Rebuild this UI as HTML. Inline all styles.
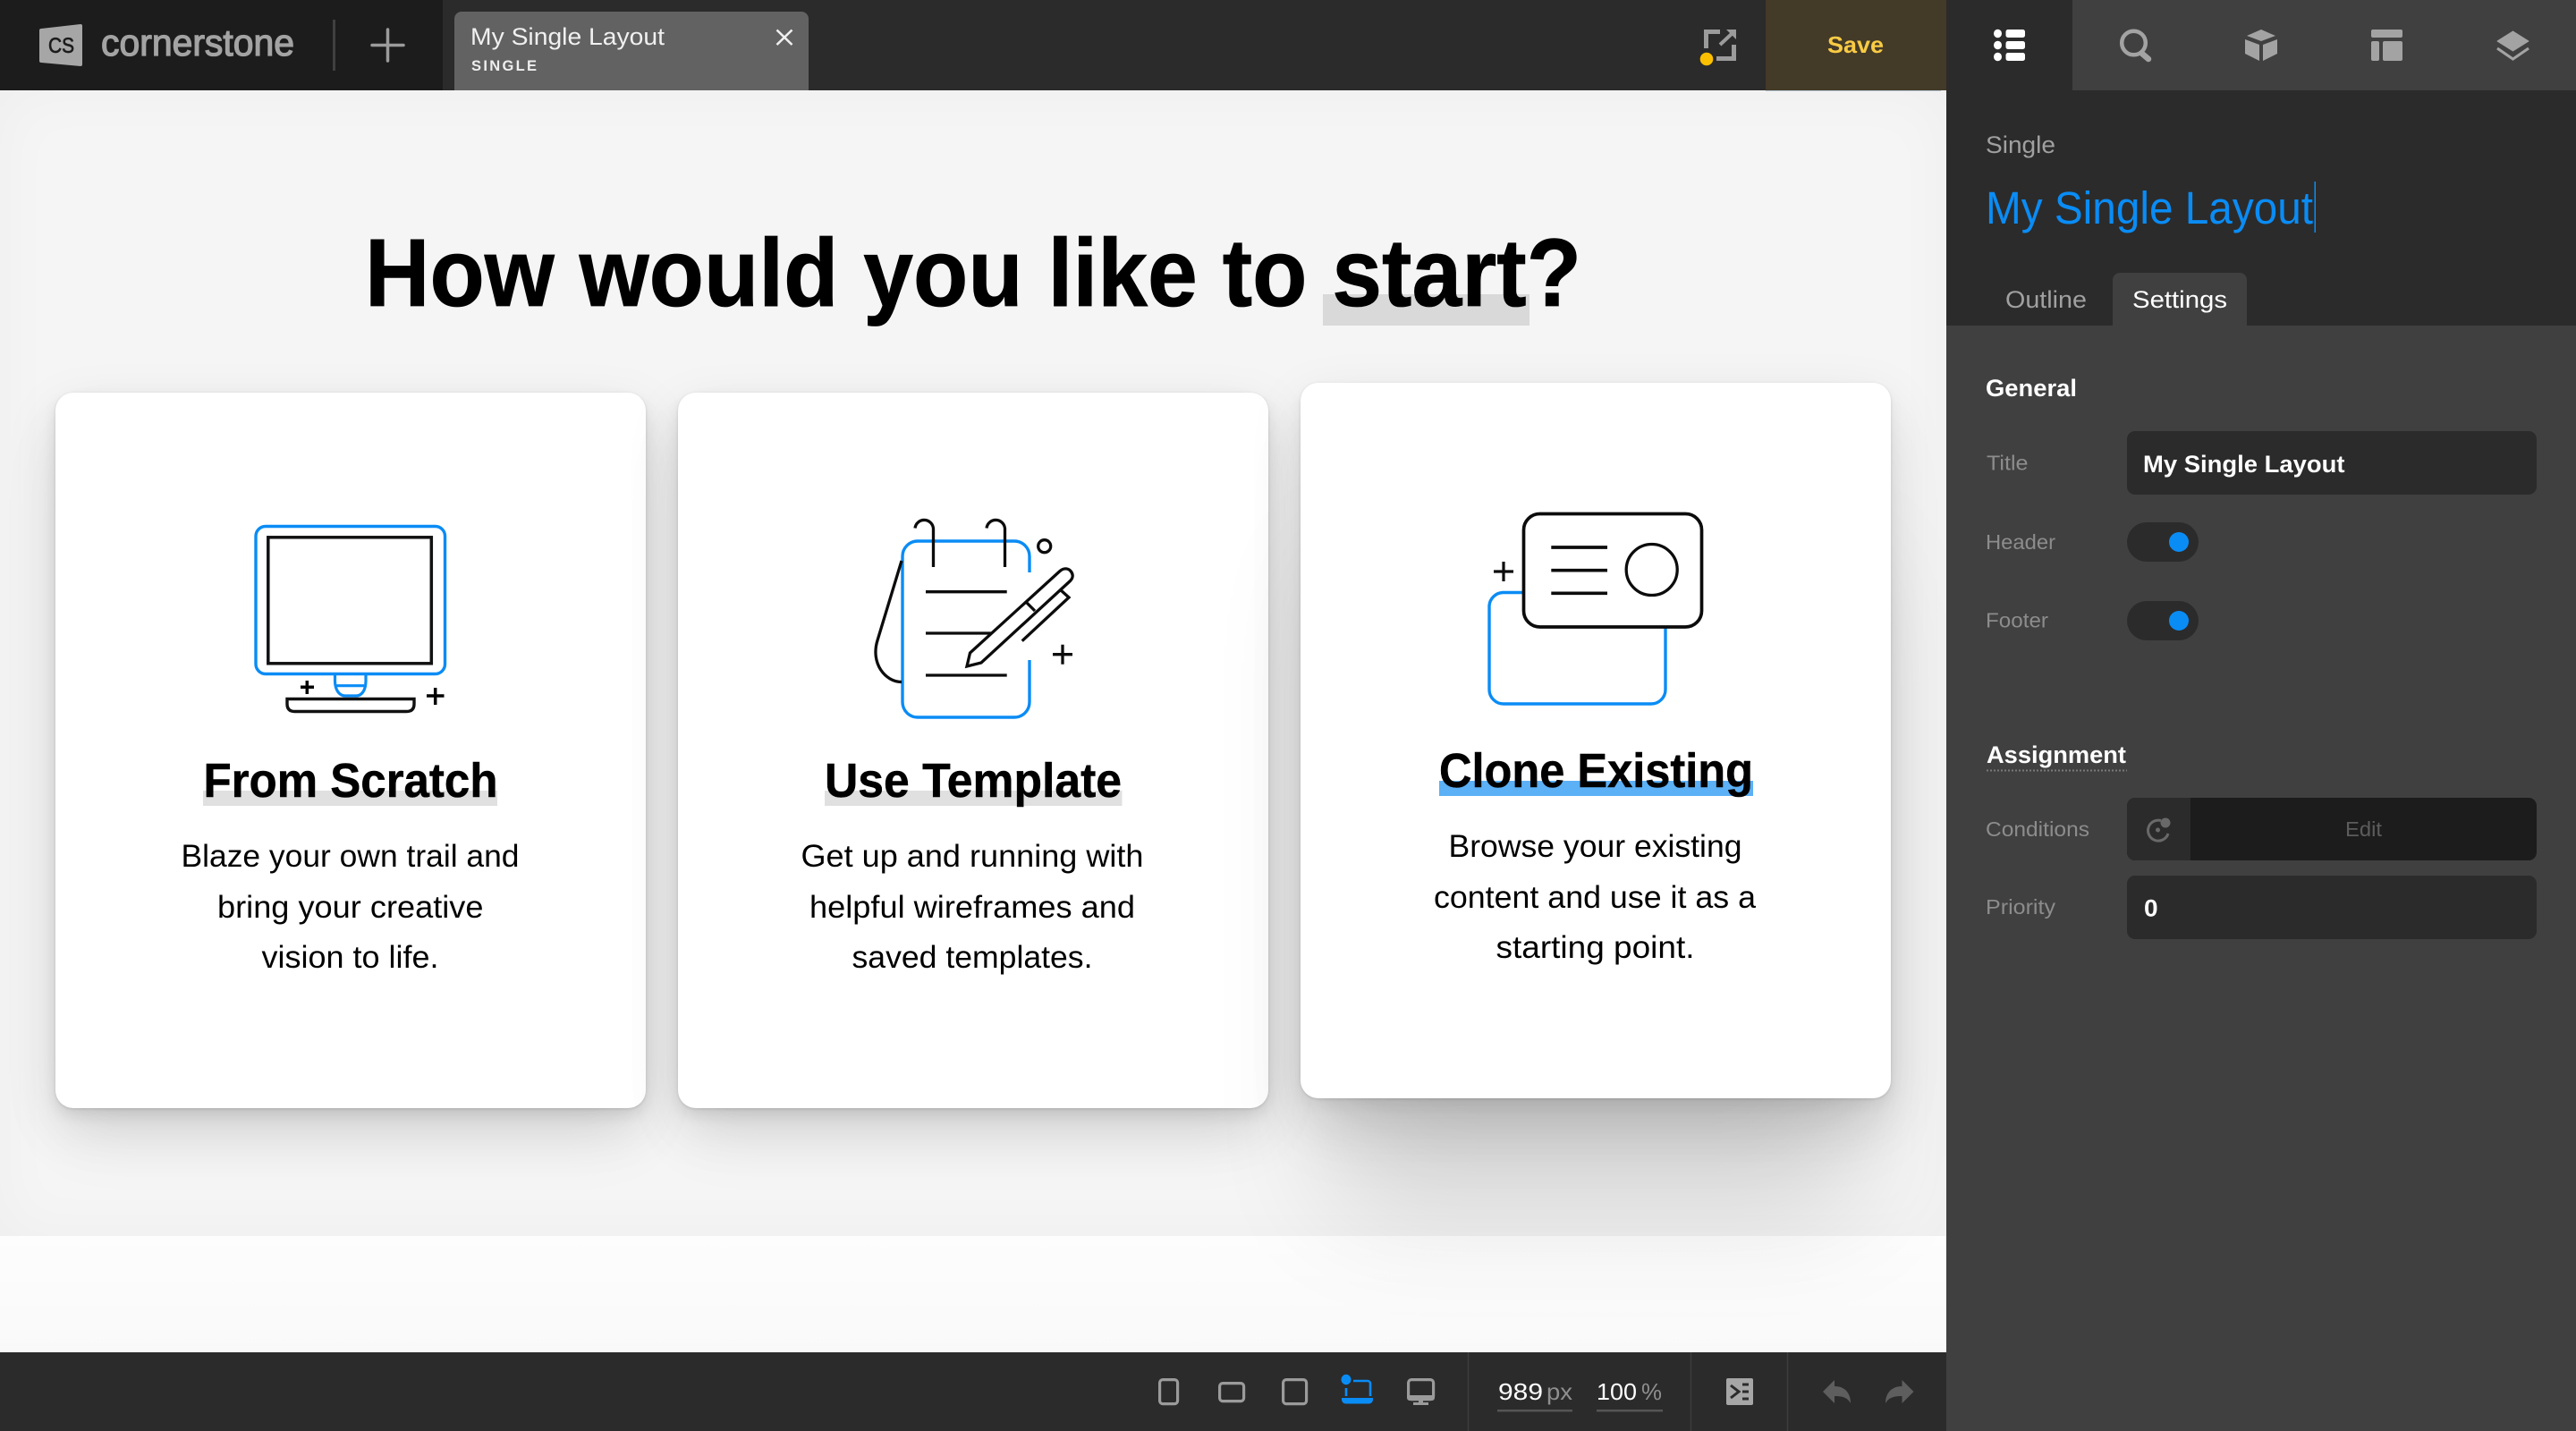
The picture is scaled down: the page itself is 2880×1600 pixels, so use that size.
<!DOCTYPE html>
<html lang="en"><head><meta charset="utf-8"><title>Cornerstone</title>
<style>
html,body{margin:0;padding:0;width:2880px;height:1600px;overflow:hidden;background:#404040}
#canvas{position:absolute;left:0;top:101px;width:2176px;height:1411px;overflow:hidden;background:linear-gradient(#fdfdfd 1281px,#f9f9f9 1411px)}
#sec{position:absolute;left:0;top:0;width:2176px;height:1281px;background:#f5f5f5;box-shadow:inset 0 0 70px rgba(0,0,0,.03)}
.card{position:absolute;background:#fff;border-radius:20px;width:660px}
.c1{box-shadow:0 1px 3px rgba(0,0,0,.12),0 8px 16px rgba(0,0,0,.09),0 40px 80px -10px rgba(0,0,0,.07),0 20px 60px rgba(0,0,0,.1)}
.c3{box-shadow:0 1px 3px rgba(0,0,0,.12),0 8px 16px rgba(0,0,0,.05),0 50px 80px -10px rgba(0,0,0,.07),0 160px 200px -40px rgba(0,0,0,.14),0 20px 60px rgba(0,0,0,.1)}
svg{position:absolute;left:0;top:0}
text{font-family:"Liberation Sans",sans-serif}
.b{font-weight:700}
.lbl{font-size:23px;fill:#8c8c8c}
.body{font-size:35.500px;fill:#000}
.h3{font-size:54px;font-weight:700;fill:#000}
</style></head><body>
<div id="canvas">
<div id="sec"></div>
<div class="card c1" style="left:62px;top:338px;height:800px"></div>
<div class="card c1" style="left:758px;top:338px;height:800px"></div>
<div class="card c3" style="left:1454px;top:327px;height:800px"></div>
</div>
<svg width="2880" height="1600" viewBox="0 0 2880 1600" xmlns="http://www.w3.org/2000/svg">
<!-- top bar -->
<rect x="0" y="0" width="2176" height="101" fill="#2b2b2b"/>
<rect x="0" y="0" width="495" height="101" fill="#1c1c1c"/>
<path d="M46 32 L90 27 Q92 27 92 29 V72 Q92 74 90 74 L46 70 Q44 70 44 68 V34 Q44 32 46 32Z" fill="#a6a6a6"/>
<text x="54" y="59" font-size="24" fill="#1c1c1c" stroke="#1c1c1c" stroke-width=".7" textLength="29" lengthAdjust="spacingAndGlyphs">CS</text>
<text x="113" y="62" font-size="42" fill="#a3a3a3" stroke="#a3a3a3" stroke-width="1.300" textLength="216" lengthAdjust="spacingAndGlyphs">cornerstone</text>
<rect x="372" y="22" width="3" height="57" fill="#404040"/>
<path d="M433.500 33V68M416 50.500H451" stroke="#9b9b9b" stroke-width="3.500" stroke-linecap="round"/>
<path d="M508 101V21a8 8 0 0 1 8-8H896a8 8 0 0 1 8 8V101Z" fill="#626262"/>
<text x="526" y="50" font-size="27" fill="#f0f0f0" textLength="217" lengthAdjust="spacingAndGlyphs">My Single Layout</text>
<text x="527" y="79" font-size="16.500" font-weight="700" fill="#eee" textLength="73" lengthAdjust="spacing">SINGLE</text>
<path d="M868.500 33.500L885.500 50M885.500 33.500L868.500 50" stroke="#f0f0f0" stroke-width="2.600"/>
<!-- export -->
<path d="M1907.500 54V35.500H1923M1919 65.500H1938.500V50" fill="none" stroke="#9b9b9b" stroke-width="5"/>
<path d="M1923 50L1938 36" stroke="#9b9b9b" stroke-width="4"/>
<path d="M1930 33H1941V44Z" fill="#9b9b9b"/>
<circle cx="1908" cy="66" r="7.300" fill="#fcc000"/>
<rect x="1974" y="0" width="202" height="101" fill="#433a28"/>
<rect x="1974" y="101" width="196" height="1" fill="#b9c6d1"/>
<text x="2043" y="59" font-size="26" font-weight="700" fill="#f8cb45" textLength="63" lengthAdjust="spacingAndGlyphs">Save</text>
<!-- panel -->
<rect x="2176" y="0" width="704" height="364" fill="#2b2b2b"/>
<rect x="2176" y="364" width="704" height="1236" fill="#404040"/>
<rect x="2317" y="0" width="563" height="101" fill="#404040"/>
<g fill="#fff">
<ellipse cx="2233.500" cy="37.500" rx="4.500" ry="4.700"/><ellipse cx="2233.500" cy="50.500" rx="4.500" ry="4.700"/><ellipse cx="2233.500" cy="63.500" rx="4.500" ry="4.700"/>
<rect x="2242.500" y="33" width="21.500" height="9" rx="2.500"/><rect x="2242.500" y="46" width="21.500" height="9" rx="2.500"/><rect x="2242.500" y="59" width="21.500" height="9" rx="2.500"/>
</g>
<g fill="#a3a3a3">
<circle cx="2385.500" cy="48" r="13.300" fill="none" stroke="#a3a3a3" stroke-width="4.500"/>
<path d="M2395 60L2402 66" stroke="#a3a3a3" stroke-width="6.500" stroke-linecap="round"/>
<path d="M2528 33L2544 40L2528 46L2512 40Z"/>
<path d="M2510 44L2526 50V68L2510 60Z"/><path d="M2546 44L2530 50V68L2546 60Z"/>
<rect x="2651" y="33" width="35" height="9" rx="2"/><rect x="2651" y="46" width="9" height="22" rx="2"/><rect x="2664" y="46" width="22" height="22" rx="2"/>
<path d="M2809.500 35L2827 46L2809.500 57L2792 46Z" stroke="#a3a3a3" stroke-width="1" stroke-linejoin="round"/>
<path d="M2792 54L2809.500 66L2827 54" fill="none" stroke="#a3a3a3" stroke-width="3"/>
</g>
<text x="2220" y="171" font-size="26.500" fill="#a0a0a0" textLength="78" lengthAdjust="spacingAndGlyphs">Single</text>
<text x="2220" y="250" font-size="51" fill="#0a8cf5" textLength="366" lengthAdjust="spacingAndGlyphs">My Single Layout</text>
<rect x="2587.500" y="203" width="1.500" height="57" fill="#0a8cf5"/>
<text x="2242" y="344" font-size="26.500" fill="#a0a0a0" textLength="91" lengthAdjust="spacingAndGlyphs">Outline</text>
<path d="M2362 364V313a8 8 0 0 1 8-8H2504a8 8 0 0 1 8 8V364Z" fill="#404040"/>
<text x="2384" y="344" font-size="26.500" fill="#fff" textLength="106" lengthAdjust="spacingAndGlyphs">Settings</text>
<text x="2220" y="443" font-size="26.500" class="b" fill="#fff" textLength="102" lengthAdjust="spacingAndGlyphs">General</text>
<text x="2221" y="525.500" class="lbl" textLength="46.500" lengthAdjust="spacingAndGlyphs">Title</text>
<rect x="2378" y="482" width="458" height="71" rx="9" fill="#2b2b2b"/>
<text x="2396" y="528" font-size="26.500" class="b" fill="#fff" textLength="225.500" lengthAdjust="spacingAndGlyphs">My Single Layout</text>
<text x="2220" y="614" class="lbl" textLength="78" lengthAdjust="spacingAndGlyphs">Header</text>
<rect x="2378" y="584" width="80" height="44" rx="22" fill="#2b2b2b"/><circle cx="2436" cy="606" r="11" fill="#0a8cf5"/>
<text x="2220" y="701.500" class="lbl" textLength="70" lengthAdjust="spacingAndGlyphs">Footer</text>
<rect x="2378" y="672" width="80" height="44" rx="22" fill="#2b2b2b"/><circle cx="2436" cy="694" r="11" fill="#0a8cf5"/>
<text x="2221" y="853" font-size="26.500" class="b" fill="#fff" textLength="156" lengthAdjust="spacingAndGlyphs">Assignment</text>
<path d="M2221 861.500H2378" stroke="#7a7a7a" stroke-width="2" stroke-dasharray="2 2"/>
<text x="2220" y="935" class="lbl" textLength="116" lengthAdjust="spacingAndGlyphs">Conditions</text>
<rect x="2378" y="892" width="458" height="70" rx="9" fill="#1c1c1c"/>
<path d="M2449 892H2387a9 9 0 0 0-9 9V953a9 9 0 0 0 9 9H2449Z" fill="#2b2b2b"/>
<path d="M2416 917.500A11.500 11.500 0 1 0 2424 932" fill="none" stroke="#696969" stroke-width="3"/>
<circle cx="2412.500" cy="928" r="2.500" fill="#696969"/><circle cx="2421" cy="920" r="5.500" fill="#696969"/>
<text x="2622" y="935" font-size="23" fill="#5c5c5c" textLength="41" lengthAdjust="spacingAndGlyphs">Edit</text>
<text x="2220" y="1022" class="lbl" textLength="78" lengthAdjust="spacingAndGlyphs">Priority</text>
<rect x="2378" y="979" width="458" height="71" rx="9" fill="#2b2b2b"/>
<text x="2397" y="1024.500" font-size="26.500" class="b" fill="#fff" textLength="15.600" lengthAdjust="spacingAndGlyphs">0</text>
<!-- bottom bar -->
<rect x="0" y="1512" width="2176" height="88" fill="#2b2b2b"/>
<path d="M1641.500 1512V1600M1890.500 1512V1600M1998.500 1512V1600" stroke="#3d3d3d" stroke-width="1.500"/>
<g fill="none" stroke="#9b9b9b" stroke-width="3.200">
<rect x="1296.600" y="1542.600" width="20" height="27" rx="3.500"/>
<rect x="1363.600" y="1546.600" width="27" height="20" rx="3.500"/>
<rect x="1434.600" y="1542.600" width="26" height="27" rx="3.500"/>
<rect x="1574.600" y="1542.600" width="28" height="22" rx="3.500"/>
</g>
<path d="M1573 1560H1604V1563a3 3 0 0 1-3 3H1576a3 3 0 0 1-3-3ZM1586 1566H1591V1568H1597V1571H1580V1568H1586Z" fill="#9b9b9b"/>
<ellipse cx="1505" cy="1542.500" rx="5.500" ry="5.700" fill="#0a8cf5"/>
<path d="M1513 1544H1529a3 3 0 0 1 3 3V1561M1505 1552V1561" fill="none" stroke="#0a8cf5" stroke-width="2.600"/>
<path d="M1500 1563H1535V1565a4.500 4.500 0 0 1-4.500 4.500H1504.500a4.500 4.500 0 0 1-4.500-4.500Z" fill="#0a8cf5"/>
<text x="1675" y="1565" font-size="26" fill="#fff" textLength="50" lengthAdjust="spacingAndGlyphs">989</text>
<text x="1729" y="1565" font-size="26" fill="#8f8f8f" textLength="29" lengthAdjust="spacingAndGlyphs">px</text>
<rect x="1674" y="1576" width="84" height="2.500" fill="#555"/>
<text x="1785" y="1565" font-size="26" fill="#fff" textLength="45" lengthAdjust="spacingAndGlyphs">100</text>
<text x="1835" y="1565" font-size="26" fill="#8f8f8f" textLength="23" lengthAdjust="spacingAndGlyphs">%</text>
<rect x="1785" y="1576" width="74" height="2.500" fill="#555"/>
<rect x="1930" y="1541" width="30" height="30" rx="2" fill="#a6a6a6"/>
<path d="M1935 1549L1944 1556L1935 1563" fill="none" stroke="#2b2b2b" stroke-width="3"/>
<path d="M1948 1548H1955M1948 1556H1955M1948 1564H1955" stroke="#2b2b2b" stroke-width="3"/>
<path d="M2038 1556L2051 1543V1550C2063 1550 2069 1558 2069 1569C2065 1562 2059 1561 2051 1561V1569Z" fill="#5e5e5e"/>
<path d="M2139.500 1556L2126.500 1543V1550C2114.500 1550 2108 1558 2108 1569C2112 1562 2118.500 1561 2126.500 1561V1569Z" fill="#5e5e5e"/>
<!-- headline -->
<rect x="1479" y="329" width="231" height="35" fill="#d9d9d9"/>
<text x="408" y="342" font-size="108" class="b" fill="#000" stroke="#000" stroke-width=".8" textLength="1360" lengthAdjust="spacingAndGlyphs">How would you like to start?</text>
<!-- card 1 -->
<rect x="286" y="588.500" width="211.500" height="165" rx="11" fill="none" stroke="#0a8cf5" stroke-width="3.400"/>
<rect x="299.800" y="600.800" width="182.500" height="141" fill="none" stroke="#111" stroke-width="3.500"/>
<path d="M374.500 755V761C374.500 771 379 778 386 778H398C405 778 409 771 409 761V755M376 766.700H407" fill="none" stroke="#0a8cf5" stroke-width="3.200"/>
<path d="M321 781.500H463V787Q463 795.500 454.500 795.500H329.500Q321 795.500 321 787Z" fill="none" stroke="#111" stroke-width="3.400"/>
<path d="M343.300 761V776M336 768.300H351M486.700 769V788M477 778H496.500" stroke="#000" stroke-width="3.500" fill="none"/>
<rect x="227" y="884" width="329" height="17" fill="#e0e0e0"/>
<text x="227.500" y="891" class="h3" stroke="#000" stroke-width=".5" textLength="329" lengthAdjust="spacingAndGlyphs">From Scratch</text>
<text x="202.500" y="969" class="body" textLength="378" lengthAdjust="spacingAndGlyphs">Blaze your own trail and</text>
<text x="243" y="1026" class="body" textLength="297.500" lengthAdjust="spacingAndGlyphs">bring your creative</text>
<text x="292.500" y="1082" class="body" textLength="198" lengthAdjust="spacingAndGlyphs">vision to life.</text>
<!-- card 2 -->
<path d="M1151 640V622A17 17 0 0 0 1134 605H1026A17 17 0 0 0 1009 622V785A17 17 0 0 0 1026 802H1134A17 17 0 0 0 1151 785V738" fill="none" stroke="#0a8cf5" stroke-width="3.400"/>
<g fill="none" stroke="#0c0c0c" stroke-width="3.300">
<path d="M1023 590.500A10.300 10.300 0 0 1 1043.500 591V634M1103 590.500A10.300 10.300 0 0 1 1123.500 591V634"/>
<circle cx="1167.700" cy="610.700" r="7"/>
<path d="M1008 627L981 716C973 742 990 762.500 1008 762.500"/>
<path d="M1035 661.700H1125.700M1035 708H1108M1035 755H1125.700"/>
<path d="M1081 745L1084.500 730L1185 638.500C1189 635 1194 635 1197 638.500C1200 642 1200 646 1196.500 649.500L1097 741Z"/>
<path d="M1147 673L1157 683M1185 659L1195 668L1142.700 716.700"/>
<path d="M1188 720.700V742.700M1177 731.700H1199"/>
</g>
<rect x="922" y="884" width="332.500" height="17" fill="#e0e0e0"/>
<text x="922" y="891" class="h3" stroke="#000" stroke-width=".5" textLength="332" lengthAdjust="spacingAndGlyphs">Use Template</text>
<text x="895.500" y="969" class="body" textLength="383" lengthAdjust="spacingAndGlyphs">Get up and running with</text>
<text x="905" y="1026" class="body" textLength="364" lengthAdjust="spacingAndGlyphs">helpful wireframes and</text>
<text x="952.500" y="1082" class="body" textLength="269" lengthAdjust="spacingAndGlyphs">saved templates.</text>
<!-- card 3 -->
<path d="M1702 662.500H1680A16 16 0 0 0 1665 677V771A16 16 0 0 0 1681 787H1846A16 16 0 0 0 1862 771V702" fill="none" stroke="#0a8cf5" stroke-width="3.400"/>
<rect x="1703.500" y="574.500" width="199" height="126.500" rx="18" fill="none" stroke="#0c0c0c" stroke-width="3.700"/>
<path d="M1734.300 612H1797M1734.300 637.700H1797M1734.300 663.300H1797" stroke="#0c0c0c" stroke-width="3.700"/>
<circle cx="1846.700" cy="637" r="28.500" fill="none" stroke="#0c0c0c" stroke-width="3.300"/>
<path d="M1681 628V650M1670 639H1692" stroke="#0c0c0c" stroke-width="3.200"/>
<rect x="1609" y="873" width="351" height="17" fill="#5cb0f5"/>
<text x="1609" y="880" class="h3" stroke="#000" stroke-width=".5" textLength="351" lengthAdjust="spacingAndGlyphs">Clone Existing</text>
<text x="1619.500" y="958" class="body" textLength="328" lengthAdjust="spacingAndGlyphs">Browse your existing</text>
<text x="1603" y="1015" class="body" textLength="360" lengthAdjust="spacingAndGlyphs">content and use it as a</text>
<text x="1672.500" y="1071" class="body" textLength="222" lengthAdjust="spacingAndGlyphs">starting point.</text>
</svg>
</body></html>
